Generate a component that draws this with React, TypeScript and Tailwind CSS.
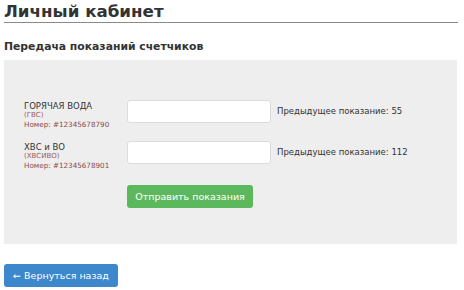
import React from "react";

export default function App() {
  const rows = [
    { name: "ГОРЯЧАЯ ВОДА", code: "(ГВС)", num: "Номер: #12345678790", prev: "55" },
    { name: "ХВС и ВО", code: "(ХВСИВО)", num: "Номер: #12345678901", prev: "112" },
  ];
  return (
    <div className="w-[464px] h-[290px] bg-white text-[#333] overflow-hidden" style={{ fontFamily: '"DejaVu Sans", Verdana, sans-serif' }}>
      <div className="px-[4px] pt-[2px]">
        <h1 className="text-[16.7px] font-bold leading-[19px] pb-[1px] border-b border-[#8a8a8a] mr-[2px]">Личный кабинет</h1>
        <h2 className="text-[10.8px] font-bold mt-[17px] leading-[14px]">Передача показаний счетчиков</h2>
        <div className="mt-[6px] mr-[3px] bg-[#eeeeee] h-[184px] pt-[40px] pl-[20px]">
          <div className="flex flex-col gap-[13px]">
            {rows.map((r) => (
              <div key={r.name} className="flex items-start h-[28px]">
                <div className="w-[103px] flex flex-col pt-[1px]">
                  <span className="text-[8.5px] leading-[10px] text-[#333]">{r.name}</span>
                  <span className="text-[7px] leading-[9px] text-[#9a5a5a]">{r.code}</span>
                  <span className="text-[7.2px] leading-[9px] text-[#8a4a4a]">{r.num}</span>
                </div>
                <div className="flex items-center h-[23px]">
                  <div className="w-[144px] h-[23px] bg-white border border-[#dcdcdc] rounded-[3px]" />
                  <span className="ml-[6px] text-[8.5px] text-[#333]">Предыдущее показание: {r.prev}</span>
                </div>
              </div>
            ))}
          </div>
          <button className="ml-[103px] mt-[16px] w-[126px] h-[23px] rounded-[3px] bg-[#5cb85c] text-white text-[9.5px] leading-[23px]">
            Отправить показания
          </button>
        </div>
        <button className="mt-[20px] w-[114px] h-[23px] rounded-[3px] bg-[#3d87cc] text-white text-[9.5px] leading-[23px]">
          ← Вернуться назад
        </button>
      </div>
    </div>
  );
}
